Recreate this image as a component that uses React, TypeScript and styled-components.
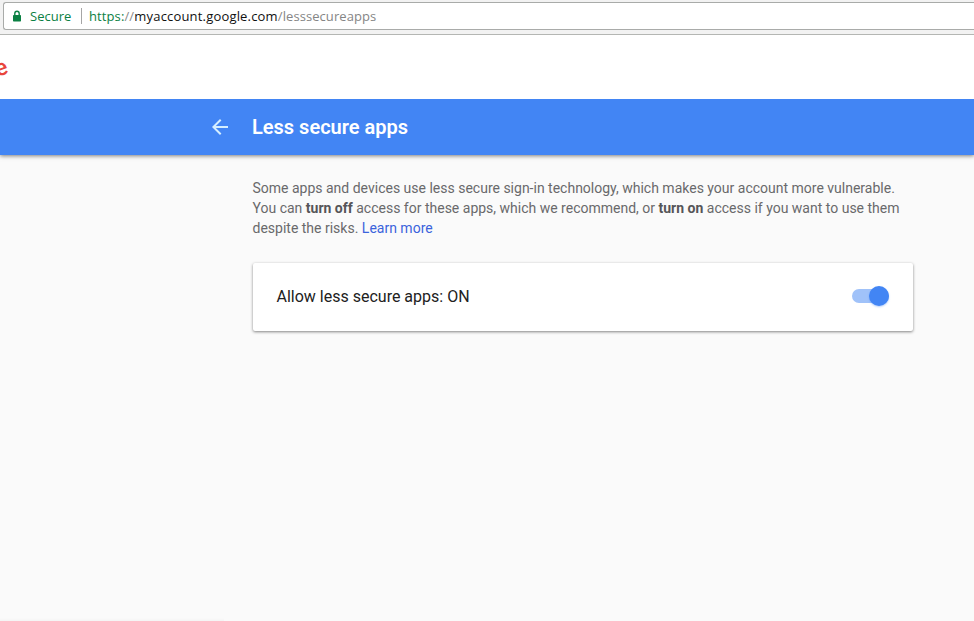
import React from "react";
import styled, { createGlobalStyle } from "styled-components";

const GlobalStyle = createGlobalStyle`
  * { box-sizing: border-box; }
  html, body { margin: 0; height: 100%; overflow: hidden; background: #fafafa; }
  #root { height: 100%; }
`;

const Page = styled.div`
  display: flex;
  flex-direction: column;
  height: 100vh;
  overflow: hidden;
  font-family: Roboto, sans-serif;
  background: #fafafa;
`;

const BrowserBar = styled.div`
  flex: none;
  height: 35px;
  padding: 2px 0 0 3px;
  background: #f2f2f2;
  border-bottom: 1px solid #b4b6b3;
`;

const AddressField = styled.div`
  display: flex;
  align-items: center;
  height: 28px;
  padding-left: 8px;
  background: #fff;
  border: 1px solid #a9aba9;
  border-right: 0;
  border-radius: 3px 0 0 3px;
  font: 13px/18px "Open Sans", sans-serif;
  white-space: nowrap;
`;

const SecureLabel = styled.span`
  width: 51px;
  margin-left: 8px;
  color: #0b8043;
  letter-spacing: 0;
`;

const Divider = styled.span`
  width: 1px;
  height: 16px;
  margin-right: 7px;
  background: #a6a6a6;
`;

const UrlPart = styled.span<{ $color: string; $spacing: number }>`
  color: ${(p) => p.$color};
  letter-spacing: ${(p) => p.$spacing}px;
`;

const LogoBar = styled.header`
  position: relative;
  z-index: 1;
  flex: none;
  height: 64px;
  padding-top: 21px;
  overflow: hidden;
  background: #fff;
`;

const LogoLetter = styled.span`
  display: block;
  width: 14px;
  margin-left: -5px;
  color: #e8453c;
  font: 500 23px/24px Roboto, sans-serif;
  transform: rotate(-20deg);
`;

const TitleBar = styled.div`
  flex: none;
  display: flex;
  align-items: center;
  height: 56px;
  padding-left: 208px;
  background: #4285f4;
  color: #fff;
  box-shadow: 0 1px 4px rgba(0, 0, 0, 0.5);
`;

const BackButton = styled.button`
  display: flex;
  padding: 0;
  border: 0;
  background: none;
  color: #d5efff;
`;

const Title = styled.h1`
  margin: 0 0 0 20px;
  font: 600 20px/28px Roboto, sans-serif;
`;

const Content = styled.main`
  flex: 1;
  width: 660px;
  margin: 23px 0 0 252.5px;
`;

const Intro = styled.p`
  margin: 0;
  color: #69696b;
  font-size: 14px;
  line-height: 20px;
  white-space: nowrap;
`;

const Strong = styled.b`
  color: #555558;
  font-weight: 700;
`;

const Link = styled.a`
  color: #3b63dc;
  text-decoration: none;
`;

const Card = styled.section`
  display: flex;
  align-items: center;
  justify-content: space-between;
  height: 68px;
  margin-top: 25px;
  padding: 0 24px;
  background: #fff;
  border-radius: 2px;
  box-shadow: 0 1px 3px rgba(0, 0, 0, 0.48);
`;

const CardLabel = styled.span`
  color: #212121;
  font-size: 16px;
  line-height: 24px;
`;

const Track = styled.button`
  display: flex;
  align-items: center;
  justify-content: flex-end;
  width: 37px;
  height: 14px;
  margin-bottom: 2px;
  padding: 0;
  border: 0;
  border-radius: 7px;
  background: #a0c2f9;
`;

const Thumb = styled.span`
  flex: none;
  width: 20px;
  height: 20px;
  border-radius: 50%;
  background: #4285f4;
  box-shadow: 0 1px 2px rgba(66, 133, 244, 0.4);
`;

const StatusEdge = styled.div`
  flex: none;
  width: 224px;
  height: 3px;
  background: linear-gradient(#fafafa, #f4f4f4);
`;

export default function App() {
  return (
    <Page>
      <GlobalStyle />
      <BrowserBar>
        <AddressField>
          <svg width="10" height="12" viewBox="0 0 10 12">
            <path d="M2.8 6V3.4a2.2 2.2 0 0 1 4.4 0V6" fill="none" stroke="#0b8043" strokeWidth="1.4" />
            <rect x="1" y="5" width="8" height="6.5" rx="0.7" fill="#0b8043" />
          </svg>
          <SecureLabel>Secure</SecureLabel>
          <Divider />
          <UrlPart $color="#0b8043" $spacing={0.1}>https:</UrlPart>
          <UrlPart $color="#8a8a8a" $spacing={0.2}>//</UrlPart>
          <UrlPart $color="#111" $spacing={0.18}>myaccount.google.com</UrlPart>
          <UrlPart $color="#858585" $spacing={0.07}>/lesssecureapps</UrlPart>
        </AddressField>
      </BrowserBar>
      <LogoBar>
        <LogoLetter>e</LogoLetter>
      </LogoBar>
      <TitleBar>
        <BackButton aria-label="Back">
          <svg width="24" height="24" viewBox="0 0 24 24" fill="currentColor">
            <path d="M20 11H7.83l5.59-5.59L12 4l-8 8 8 8 1.41-1.41L7.83 13H20v-2z" />
          </svg>
        </BackButton>
        <Title>Less secure apps</Title>
      </TitleBar>
      <Content>
        <Intro>
          Some apps and devices use less secure sign-in technology, which makes your account more vulnerable.
          <br />
          You can <Strong>turn off</Strong> access for these apps, which we recommend, or <Strong>turn on</Strong> access if you want to use them
          <br />
          despite the risks. <Link>Learn more</Link>
        </Intro>
        <Card>
          <CardLabel>Allow less secure apps: ON</CardLabel>
          <Track role="switch" aria-checked="true" aria-label="Allow less secure apps">
            <Thumb />
          </Track>
        </Card>
      </Content>
      <StatusEdge />
    </Page>
  );
}
